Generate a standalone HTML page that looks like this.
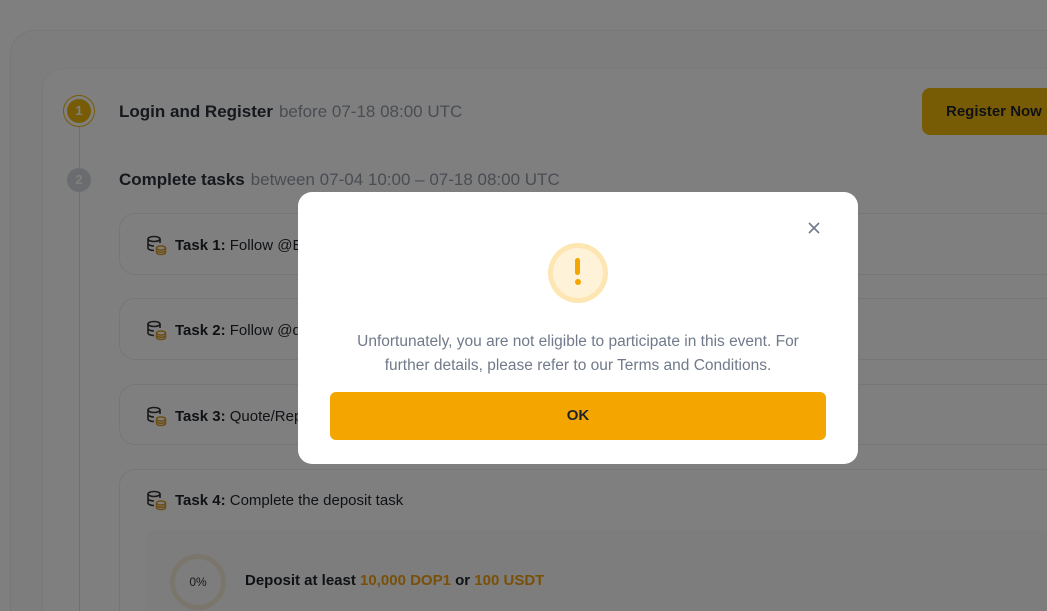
<!DOCTYPE html>
<html style="width:1047px;height:611px;overflow:hidden"><head><style>
*{box-sizing:border-box;margin:0;padding:0}
body{width:1047px;height:611px;overflow:hidden;background:#fff;font-family:"Liberation Sans",sans-serif;position:relative;color:#1e2329}
.abs{position:absolute}
.clip{left:0;top:0;width:1047px;height:611px;overflow:hidden}
.outer{left:10px;top:30px;width:1037px;height:581px;border:1px solid #eee;border-right:none;border-bottom:none;border-radius:24px 0 0 0;background:#fafafa}
.inner{left:42px;top:68px;width:1005px;height:543px;border-radius:20px 0 0 0;background:#fff;border:1px solid #f3f3f3;border-right:none;border-bottom:none}
.step{font-size:17px;font-weight:bold;color:#2b3139}
.step span{font-weight:normal;color:#929aa5;margin-left:6px}
.task{left:119px;width:928px;border:1px solid #eaecef;border-right:none;border-radius:16px 0 0 16px;background:#fff}
.tl{position:absolute;left:26px;font-size:15px;display:flex;align-items:center;gap:8px}
.tl b{font-weight:bold}
.ov{left:0;top:0;width:1047px;height:611px;background:rgba(0,0,0,0.5)}
.modal{left:298px;top:192px;width:560px;height:272px;background:#fff;border-radius:14px}
</style></head><body>
<div class="abs clip">
<div class="abs outer"></div>
<div class="abs inner"></div>
<div class="abs" style="left:79px;top:126px;width:1px;height:485px;background:#e0e0e0"></div>
<div class="abs" style="left:63px;top:95px;width:32px;height:32px;border-radius:50%;border:1px solid #F0B90B;background:#fff"></div>
<div class="abs" style="left:67px;top:99px;width:24px;height:24px;border-radius:50%;background:#F0B90B;color:#fff;font-size:13px;font-weight:bold;text-align:center;line-height:24px">1</div>
<div class="abs" style="left:67px;top:168px;width:24px;height:24px;border-radius:50%;background:#d6d9de;color:#fff;font-size:13px;font-weight:bold;text-align:center;line-height:24px">2</div>
<div class="abs step" style="left:119px;top:102px">Login and Register<span>before 07-18 08:00 UTC</span></div>
<div class="abs step" style="left:119px;top:170px">Complete tasks<span>between 07-04 10:00 – 07-18 08:00 UTC</span></div>
<div class="abs" style="left:922px;top:88px;width:125px;height:47px;background:#F0B90B;border-radius:8px 0 0 8px;font-size:15px;font-weight:bold;line-height:47px;padding-left:24px;white-space:nowrap;overflow:hidden">Register Now</div>
<svg width="0" height="0" style="position:absolute"><defs><g id="ic"><ellipse cx="8" cy="4" rx="6" ry="2.5" fill="none" stroke="#333" stroke-width="1.6"/><path d="M2 4v9c0 1.4 2.7 2.5 6 2.5M14 4v4M2 8.5c0 1.4 2.7 2.5 6 2.5" fill="none" stroke="#333" stroke-width="1.6"/><ellipse cx="15" cy="13" rx="4.5" ry="2" fill="#fff" stroke="#d89a28" stroke-width="1.5"/><path d="M10.5 13v4.5c0 1.1 2 2 4.5 2s4.5-.9 4.5-2V13M10.5 15.3c0 1.1 2 2 4.5 2s4.5-.9 4.5-2" fill="none" stroke="#d89a28" stroke-width="1.5"/></g></defs></svg>
<div class="abs task" style="top:213px;height:62px"><div class="tl" style="top:21px"><svg width="21" height="21"><use href="#ic"/></svg><span><b>Task 1:</b> Follow @Binance</span></div></div>
<div class="abs task" style="top:298px;height:62px"><div class="tl" style="top:21px"><svg width="21" height="21"><use href="#ic"/></svg><span><b>Task 2:</b> Follow @dop</span></div></div>
<div class="abs task" style="top:384px;height:61px"><div class="tl" style="top:21px"><svg width="21" height="21"><use href="#ic"/></svg><span><b>Task 3:</b> Quote/Repost</span></div></div>
<div class="abs task" style="top:469px;height:142px;border-bottom:none;border-radius:16px 0 0 0"><div class="tl" style="top:20px"><svg width="21" height="21"><use href="#ic"/></svg><span><b>Task 4:</b> Complete the deposit task</span></div>
<div class="abs" style="left:26px;top:60px;width:900px;height:81px;background:#fafafa;border-radius:12px 0 0 0"></div>
<div class="abs" style="left:50px;top:84px;width:56px;height:56px;border-radius:50%;border:5px solid #f5ecd9;font-size:12px;text-align:center;line-height:46px;color:#333">0%</div>
<div class="abs" style="left:125px;top:102px;font-size:15px;font-weight:bold;color:#1e2329">Deposit at least <span style="color:#f0a010">10,000 DOP1</span> or <span style="color:#f0a010">100 USDT</span></div>
</div>
<div class="abs ov"></div>
<div class="abs modal">
<svg class="abs" style="left:509px;top:29px" width="14" height="14"><path d="M2 2L12 12M12 2L2 12" stroke="#707a8a" stroke-width="1.6"/></svg>
<div class="abs" style="left:250px;top:51px;width:60px;height:60px;border-radius:50%;background:#fde6b1"></div>
<div class="abs" style="left:255px;top:56px;width:50px;height:50px;border-radius:50%;background:#fef2d9"></div>
<div class="abs" style="left:277px;top:66px;width:5px;height:17px;border-radius:3px;background:#F5A500"></div>
<div class="abs" style="left:277px;top:87px;width:6px;height:6px;border-radius:50%;background:#F5A500"></div>
<div class="abs" style="left:40px;top:138px;width:480px;text-align:center;font-size:15.5px;line-height:24px;color:#707a8a">Unfortunately, you are not eligible to participate in this event. For further details, please refer to our Terms and Conditions.</div>
<div class="abs" style="left:32px;top:200px;width:496px;height:48px;background:#F5A500;border-radius:6px;text-align:center;line-height:48px;font-size:15px;font-weight:bold;color:#1e2329">OK</div>
</div>
</div>
</body></html>
